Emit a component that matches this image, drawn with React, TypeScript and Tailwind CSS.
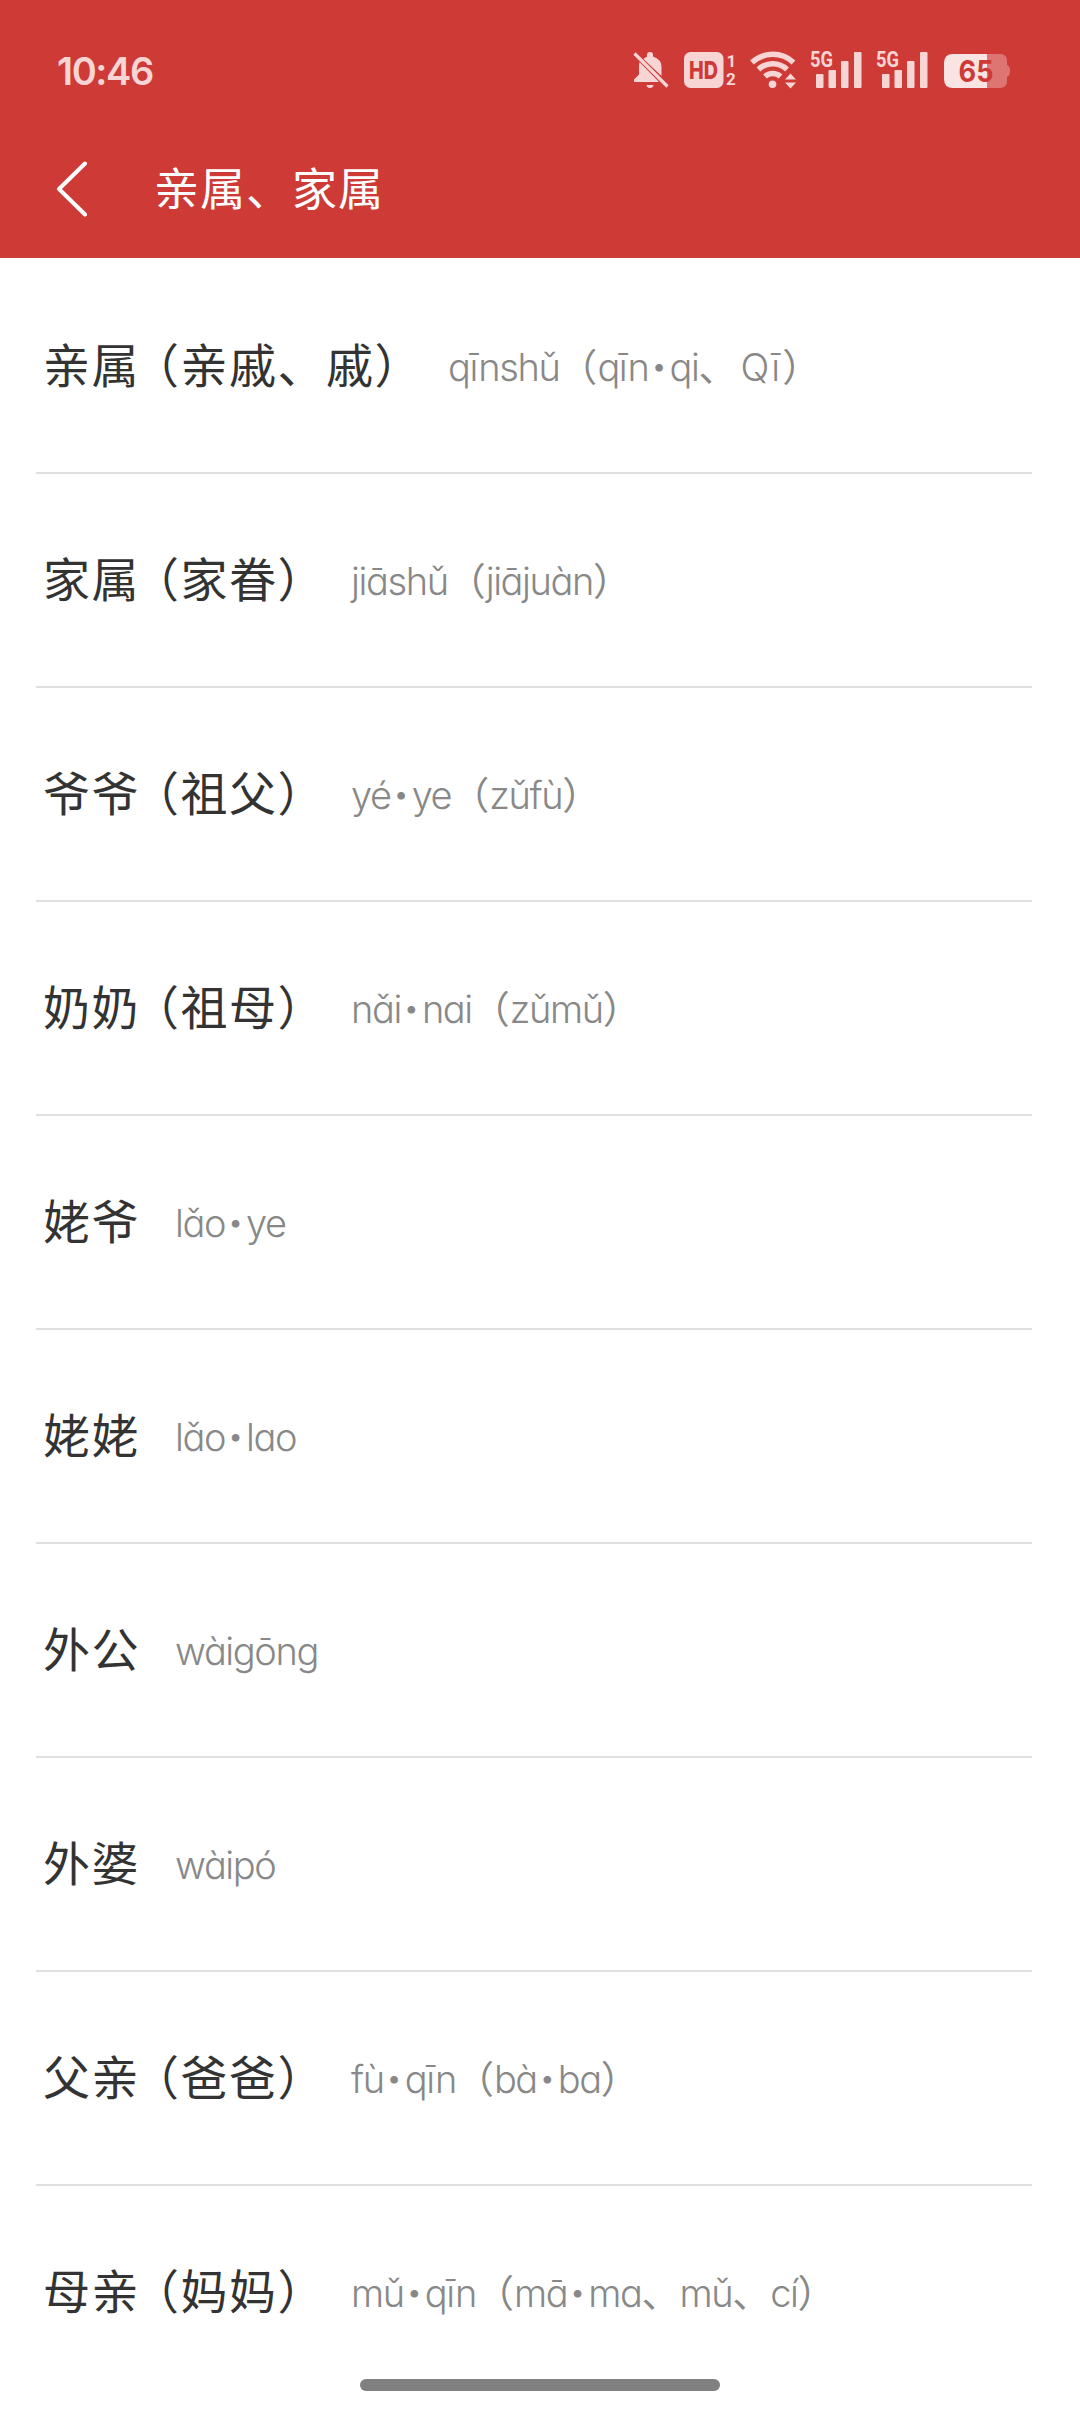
type Word = {
    hanzi: string
    pinyin: string
}

const words: Word[] = [
    { hanzi: "亲属（亲戚、戚）", pinyin: "qīnshǔ（qīn·qi、Qī）" },
    { hanzi: "家属（家眷）", pinyin: "jiāshǔ（jiājuàn）" },
    { hanzi: "爷爷（祖父）", pinyin: "yé·ye（zǔfù）" },
    { hanzi: "奶奶（祖母）", pinyin: "nǎi·nai（zǔmǔ）" },
    { hanzi: "姥爷", pinyin: "lǎo·ye" },
    { hanzi: "姥姥", pinyin: "lǎo·lao" },
    { hanzi: "外公", pinyin: "wàigōng" },
    { hanzi: "外婆", pinyin: "wàipó" },
    { hanzi: "父亲（爸爸）", pinyin: "fù·qīn（bà·ba）" },
    { hanzi: "母亲（妈妈）", pinyin: "mǔ·qīn（mā·ma、mǔ、cí）" },
]

const BellOff = () => (
    <svg className="w-[36px] h-[38px]" viewBox="0 0 36 38">
        <path d="M6.500 11L26 31H1v-2.500l5-5V15q0-2 .5-4zM10.500 8q2-1.800 3.500-2.300V4q0-3 3-3T20 4v1.500q8.500 2.500 8.500 11V25z" fill="#f7d5d5" />
        <path d="M1.500 2.500L34.500 35.500" stroke="#f7d5d5" strokeWidth="3.200" />
        <path d="M13.500 34h7q-.5 3-3.500 3T13.500 34z" fill="#f7d5d5" />
    </svg>
)

const Hd = () => (
    <svg className="w-[52px] h-[36px]" viewBox="0 0 52 36">
        <rect width="39.500" height="36" rx="6.500" fill="#f7d5d5" />
        <text x="5" y="27" textLength="29" lengthAdjust="spacingAndGlyphs" fontSize="25" fontWeight="800" fontFamily="Inter, sans-serif" fill="#ce3a36">HD</text>
        <text x="42.500" y="15" fontSize="17" fontWeight="700" fontFamily="Roboto, sans-serif" fill="#f7d5d5">1</text>
        <text x="42" y="33" fontSize="17" fontWeight="700" fontFamily="Roboto, sans-serif" fill="#f7d5d5">2</text>
    </svg>
)

const Wifi = () => (
    <svg className="w-[47px] h-[38px]" viewBox="0 0 47 38">
        <g fill="none" stroke="#f7d5d5" strokeWidth="5.500">
            <path d="M2 11.500A30.500 30.500 0 0 1 43.500 11.500" />
            <path d="M8.500 18.500A20.500 20.500 0 0 1 37 18.500" />
            <path d="M15 25.500A11.500 11.500 0 0 1 30.500 25.500" />
        </g>
        <circle cx="22.500" cy="33.300" r="3.800" fill="#f7d5d5" />
        <path d="M35 28.500L40.500 22.500 46 28.500zM35 31.500h11L40.500 37.500z" fill="#f7d5d5" />
    </svg>
)

const Signal = () => (
    <svg className="w-[52px] h-[38px] overflow-visible" viewBox="0 0 52 38">
        <text x="0" y="16" textLength="23" lengthAdjust="spacingAndGlyphs" fontSize="22" fontWeight="700" fontFamily="Roboto, sans-serif" fill="#f7d5d5">5G</text>
        <g fill="#f7d5d5">
            <rect x="6" y="23" width="7.500" height="14" rx="1" />
            <rect x="18.500" y="19" width="7.500" height="18" rx="1" />
            <rect x="31" y="10" width="7.500" height="27" rx="1" />
            <rect x="44" y="1" width="7.500" height="36" rx="1" />
        </g>
    </svg>
)

const Battery = () => (
    <svg className="mt-[2px] w-[66px] h-[34px]" viewBox="0 0 66 34">
        <path d="M43 0h13q7 0 7 7v4q3 1 3 6t-3 6v4q0 7-7 7H43z" fill="#df7572" />
        <path d="M43 0H9Q0 0 0 9v16q0 9 9 9h34z" fill="#f9e4e3" />
        <text x="14.500" y="28" textLength="35" lengthAdjust="spacingAndGlyphs" fontSize="30" fontWeight="700" fontFamily="Inter, sans-serif" fill="#ce3a36">65</text>
    </svg>
)

// full-width brackets are set a little tighter than the other characters
const Hanzi = ({ text }: { text: string }) => (
    <span className="-mt-[7px] text-[47px] leading-[72px] tracking-[1.5px] text-[#333333]">
        {text.split(/([（）])/).map((part, index) => (
            <span key={index} className={part === "（" ? "-ml-2" : part === "）" ? "-mr-[10px]" : ""}>{part}</span>
        ))}
    </span>
)

const markClass: Record<string, string> = {
    "·": "inline-block w-[21px] text-center font-black tracking-normal",
    "（": "font-normal tracking-normal",
    "）": "font-normal tracking-normal",
    "、": "font-normal tracking-normal",
}

const Pinyin = ({ text }: { text: string }) => (
    <span className="mt-[2px] ml-[35px] font-['Inter','Noto_Sans_CJK_SC',sans-serif] text-[38px] font-light tracking-[-1.4px] text-[#888888] [font-feature-settings:'cv11']">
        {text.split(/([·（）、])/).map((part, index) => (
            <span key={index} className={/^[A-Z]/.test(part) ? "ml-1 tracking-[2px]" : markClass[part]}>{part}</span>
        ))}
    </span>
)

const App = () => {
    return (
        <div className="relative w-[1080px] h-[2412px] overflow-hidden bg-white font-['Noto_Sans_CJK_SC',sans-serif]">
            <header className="h-[258px] bg-[#ce3a36]">
                <div className="flex h-[120px] items-center justify-between pl-[57px] pr-[70px] pt-[20px]">
                    <span className="mt-[2px] font-['Inter',sans-serif] text-[38px] font-semibold tracking-[-1.4px] text-[#f7d5d5]">10:46</span>
                    <div className="flex items-center">
                        <BellOff />
                        <div className="w-[15px]" />
                        <Hd />
                        <div className="w-[14px]" />
                        <Wifi />
                        <div className="w-[13px]" />
                        <Signal />
                        <div className="w-[14px]" />
                        <Signal />
                        <div className="w-[16px]" />
                        <Battery />
                    </div>
                </div>
                <div className="flex h-[138px] items-center pl-[55px]">
                    <svg className="w-[34px] h-[56px]" viewBox="0 0 34 56" fill="none" stroke="white" strokeWidth="4" strokeLinecap="round" strokeLinejoin="round">
                        <path d="M30 2.500L4 28l26 25.500" />
                    </svg>
                    <h1 className="-mt-[4px] ml-[65px] text-[45px] leading-[68px] tracking-[1px] text-white">亲属、家属</h1>
                </div>
            </header>
            <ul className="pt-[2px]">
                {words.map((word) => (
                    <li key={word.hanzi} className="ml-[36px] mr-[48px] flex h-[214px] items-center whitespace-nowrap border-b-2 border-[#e0e0e0] pl-[7px] last:border-transparent">
                        <Hanzi text={word.hanzi} />
                        <Pinyin text={word.pinyin} />
                    </li>
                ))}
            </ul>
            <div className="absolute bottom-[21px] left-[360px] h-3 w-[360px] rounded-full bg-[#808080]" />
        </div>
    )
}

export default App
